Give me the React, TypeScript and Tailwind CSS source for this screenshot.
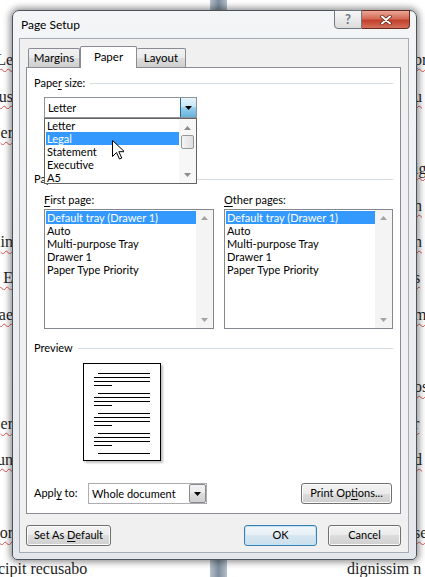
import type { ReactNode } from 'react'

// fragments of the Word document that peek out on both sides of the dialog
const docRows: [string, string][] = [
    ['Le', 'pro'],
    ['us', 'u'],
    ['er', ''],
    ['', 'ig'],
    ['', 'n'],
    ['in', 'n'],
    ['. E', 's'],
    ['ae', 'm'],
    ['', ''],
    ['', 'os'],
    ['er', 'r'],
    ['un', 'd'],
    ['', ''],
    ['or', 'se'],
]

const trays = ['Default tray (Drawer 1)', 'Auto', 'Multi-purpose Tray', 'Drawer 1', 'Paper Type Priority']
const sizes = ['Letter', 'Legal', 'Statement', 'Executive', 'A5']

function Mn({ children }: { children: ReactNode }) {
    return <span className="underline underline-offset-[2px]">{children}</span>
}

function Squiggle({ children }: { children: ReactNode }) {
    return <span className="underline decoration-wavy decoration-[#d9534f] decoration-1 underline-offset-[3px]">{children}</span>
}

function DocumentBackground() {
    return (
        <div className="flex flex-col pt-[42px] font-['Liberation_Serif',serif] text-[16px] text-[#1e1e1e]">
            {docRows.map(([left, right], i) => (
                <div key={i} className="flex h-[36.36px] items-center">
                    <span className="flex w-[13px] justify-end overflow-hidden whitespace-nowrap">
                        {left && <Squiggle>{left}</Squiggle>}
                    </span>
                    <span className="ml-auto w-[11px] overflow-hidden whitespace-nowrap">
                        {right && <Squiggle>{right}</Squiggle>}
                    </span>
                </div>
            ))}
            <div className="flex h-[36px] items-center">
                <span className="-ml-[2px] whitespace-nowrap"><Squiggle>cipit recusabo</Squiggle></span>
                <span className="ml-auto w-[78px] overflow-hidden whitespace-nowrap"><Squiggle>dignissim n</Squiggle></span>
            </div>
        </div>
    )
}

function Caret({ color = '#000' }: { color?: string }) {
    return (
        <svg width="7" height="4" viewBox="0 0 7 4">
            <path d="M0 0h7L3.5 4z" fill={color} />
        </svg>
    )
}

function CaretUp({ color = '#a3a3a3' }: { color?: string }) {
    return (
        <svg width="7" height="4" viewBox="0 0 7 4">
            <path d="M0 4h7L3.5 0z" fill={color} />
        </svg>
    )
}

function Btn({ children, className = '', primary = false }: { children: ReactNode; className?: string; primary?: boolean }) {
    return (
        <div
            className={`flex h-[21px] items-center justify-center rounded-[3px] border ${
                primary
                    ? 'border-[#3c7fb1] bg-[linear-gradient(#f1f7fb_0%,#e7f0f6_50%,#d7e6f0_50%,#cadfec_100%)] shadow-[inset_0_0_0_1px_#bfe3f8]'
                    : 'border-[#707070] bg-[linear-gradient(#f2f2f2_0%,#ebebeb_50%,#dddddd_50%,#cfcfcf_100%)] shadow-[inset_0_0_0_1px_#fbfbfb]'
            } ${className}`}
        >
            <span className="whitespace-nowrap">{children}</span>
        </div>
    )
}

function GroupLabel({ children, className = '' }: { children: ReactNode; className?: string }) {
    return (
        <div className={`flex h-[14px] items-center gap-[5px] pl-[7px] pr-[7px] ${className}`}>
            <span className="whitespace-nowrap">{children}</span>
            <div className="h-px flex-1 bg-[#d5dce2]" />
        </div>
    )
}

function ListBox({ label, width }: { label: ReactNode; width: string }) {
    return (
        <div className={`flex flex-col ${width}`}>
            <div className="h-[14px] leading-[14px]">{label}</div>
            <div className="mt-[2px] flex h-[120px] border border-[#828790] bg-white">
                <div className="flex-1 pl-px pt-px">
                    {trays.map((t, i) => (
                        <div key={t} className={`h-[13px] pl-px leading-[13px] whitespace-nowrap ${i === 0 ? 'bg-[#3399ff] text-white' : ''}`}>
                            {t}
                        </div>
                    ))}
                </div>
                <div className="flex w-[17px] flex-col items-center justify-between bg-[#f4f4f4] py-[6px]">
                    <CaretUp />
                    <Caret color="#a3a3a3" />
                </div>
            </div>
        </div>
    )
}

function PaperSizeCombo() {
    return (
        <div className="relative ml-[17px] mt-[7px] h-[21px] w-[153px]">
            <div className="flex h-full border border-[#8e9399] bg-white">
                <span className="flex-1 pl-[3px] leading-[19px]">Letter</span>
                <div className="flex w-[16px] items-center justify-center border-l border-[#2c628b] bg-[linear-gradient(#e5f4fc_0%,#c4e5f6_50%,#98d1ef_50%,#68b3db_100%)]">
                    <Caret />
                </div>
            </div>

            {/* open dropdown list */}
            <div className="absolute left-0 top-[21px] z-20 flex h-[66px] w-[153px] overflow-hidden border border-[#646464] bg-white">
                <div className="flex-1 pl-px">
                    {sizes.map((s, i) => (
                        <div key={s} className={`h-[13px] pl-px leading-[13px] ${i === 1 ? 'bg-[#3399ff] text-white' : ''}`}>
                            {s}
                        </div>
                    ))}
                </div>
                <div className="flex w-[17px] flex-col items-center bg-[#f7f7f7] pt-[7px]">
                    <CaretUp color="#8c8c8c" />
                    <div className="mt-[5px] h-[14px] w-[13px] rounded-[2px] border border-[#979797] bg-[linear-gradient(90deg,#f5f5f5,#dedede)]" />
                    <div className="mt-auto mb-[6px]">
                        <Caret color="#8c8c8c" />
                    </div>
                </div>
                <svg className="absolute left-[67px] top-[21px]" width="12" height="20" viewBox="0 0 12 20">
                    <path d="M0.5 0.5v16l4-4 3 6.5 2.3-1-3-6.3h5.7z" fill="#fff" stroke="#000" strokeWidth="1" strokeLinejoin="round" />
                </svg>
            </div>
        </div>
    )
}

function PreviewPage() {
    const groups = [9, 29, 49, 69]
    return (
        <div className="ml-[56px] mt-[8px] h-[98px] w-[78px] border border-black bg-white shadow-[2px_2px_2px_rgba(0,0,0,0.25)]">
            <svg width="76" height="96" viewBox="0 0 76 96">
                {groups.map(y => (
                    <g key={y} stroke="#000" strokeWidth="1">
                        <line x1="14" y1={y + 0.5} x2="66" y2={y + 0.5} />
                        <line x1="10" y1={y + 4.5} x2="66" y2={y + 4.5} />
                        <line x1="10" y1={y + 8.5} x2="66" y2={y + 8.5} />
                        <line x1="10" y1={y + 12.5} x2="28" y2={y + 12.5} />
                    </g>
                ))}
                <line x1="14" y1="89.5" x2="66" y2="89.5" stroke="#000" strokeWidth="1" />
            </svg>
        </div>
    )
}

function PageSetupDialog() {
    return (
        <div className="absolute left-[12px] top-[10px] flex h-[550px] w-[405px] flex-col rounded-t-[7px] rounded-b-[5px] border border-[#4b545e] bg-[linear-gradient(#f3f5f7,#e3e7eb)] font-['Lato','Noto_Sans',sans-serif] text-[11px] text-black shadow-[0_0_7px_2px_rgba(0,0,0,0.45)]">
            {/* Title bar */}
            <div className="relative flex h-[27px] items-center pl-[8px] text-[12px]">
                Page Setup
                <div className="absolute right-[6px] top-[-1px] flex">
                    <div className="flex h-[19px] w-[28px] items-center justify-center rounded-bl-[4px] border border-[#6f7780] bg-[linear-gradient(#f7f7f7,#dcdcdc)] text-[13px] font-bold text-[#6d7580]">
                        ?
                    </div>
                    <div className="flex h-[19px] w-[48px] items-center justify-center rounded-br-[4px] border border-l-0 border-[#6b2a1f] bg-[linear-gradient(#e9a797_0%,#d46a55_45%,#c2412b_55%,#d4705c_100%)]">
                        <svg width="12" height="10" viewBox="0 0 12 10">
                            <path d="M2 1.5l8 7M10 1.5l-8 7" stroke="#5a1c12" strokeWidth="3.4" strokeLinecap="round" />
                            <path d="M2 1.5l8 7M10 1.5l-8 7" stroke="#fff" strokeWidth="2" strokeLinecap="round" />
                        </svg>
                    </div>
                </div>
            </div>

            {/* Client area */}
            <div className="ml-[6px] mr-[7px] flex h-[515px] flex-col border border-[#a5acb3] bg-[#f0f0f0] pl-[6px] pr-[7px] pt-[7px]">
                {/* Tabs */}
                <div className="flex h-[21px] items-start pl-[2px] text-[12px]">
                    <div className="mt-[2px] flex h-[19px] w-[52px] items-center justify-center rounded-t-[2px] border border-b-0 border-[#898c95] bg-[linear-gradient(#f2f2f2_0%,#ebebeb_50%,#dddddd_50%,#cfcfcf_100%)] text-[11.5px]">
                        Margins
                    </div>
                    <div className="relative z-10 flex h-[22px] w-[57px] items-center justify-center rounded-t-[2px] border border-b-0 border-[#898c95] bg-white pb-[1px] text-[11.5px]">
                        Paper
                    </div>
                    <div className="mt-[2px] flex h-[19px] w-[49px] items-center justify-center rounded-t-[2px] border border-b-0 border-l-0 border-[#898c95] bg-[linear-gradient(#f2f2f2_0%,#ebebeb_50%,#dddddd_50%,#cfcfcf_100%)] text-[11.5px]">
                        Layout
                    </div>
                </div>

                {/* Tab panel */}
                <div className="flex h-[447px] flex-col border border-[#898c95] bg-white">
                    <GroupLabel className="mt-[8px]">
                        Pape<Mn>r</Mn> size:
                    </GroupLabel>
                    <PaperSizeCombo />

                    <GroupLabel className="mt-[54px]">Paper source</GroupLabel>
                    <div className="ml-[17px] mt-[7px] flex gap-[10px]">
                        <ListBox label={<><Mn>F</Mn>irst page:</>} width="w-[170px]" />
                        <ListBox label={<><Mn>O</Mn>ther pages:</>} width="w-[169px]" />
                    </div>

                    <GroupLabel className="mt-[12px]">Preview</GroupLabel>
                    <PreviewPage />

                    <div className="mt-[22px] flex h-[21px] items-center pl-[7px] pr-[8px]">
                        <span className="w-[54px]">
                            Appl<Mn>y</Mn> to:
                        </span>
                        <div className="flex h-[21px] w-[119px] border border-[#abadb3] bg-white">
                            <span className="flex-1 pl-[3px] leading-[19px]">Whole document</span>
                            <div className="flex w-[17px] items-center justify-center rounded-[2px] border border-[#8a8a8a] bg-[linear-gradient(#f2f2f2_0%,#ebebeb_50%,#dddddd_50%,#cfcfcf_100%)]">
                                <Caret />
                            </div>
                        </div>
                        <Btn className="ml-auto w-[91px]">
                            Print Op<Mn>t</Mn>ions...
                        </Btn>
                    </div>
                </div>

                {/* Footer buttons */}
                <div className="mt-[11px] flex">
                    <Btn className="w-[85px]">
                        Set As <Mn>D</Mn>efault
                    </Btn>
                    <Btn primary className="ml-auto w-[73px]">
                        OK
                    </Btn>
                    <Btn className="ml-[11px] w-[73px]">Cancel</Btn>
                </div>
            </div>
        </div>
    )
}

export default function App() {
    return (
        <div className="relative h-[577px] w-[425px] overflow-hidden bg-white">
            <DocumentBackground />
            <div className="absolute left-[210px] top-0 h-full w-[17px] bg-[linear-gradient(90deg,#b4c0cb,#7e8e9e_50%,#b4c0cb)]" />
            <PageSetupDialog />
        </div>
    )
}
